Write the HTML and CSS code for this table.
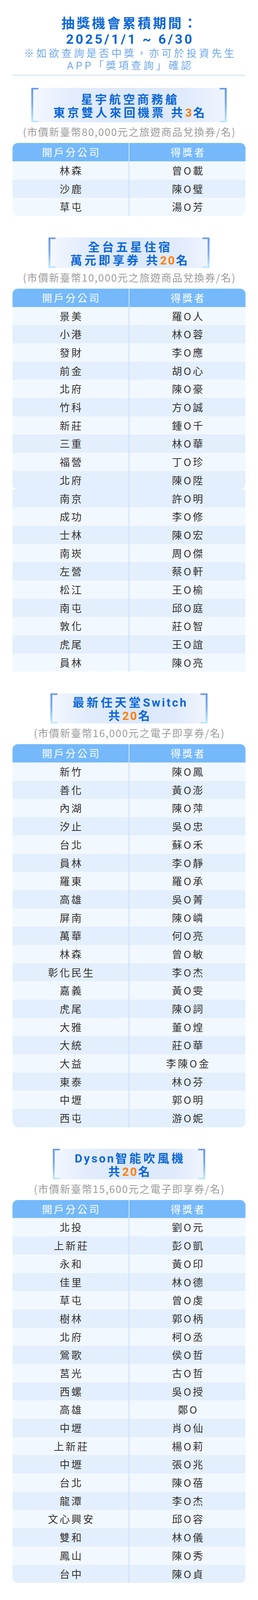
FILE: index.html
```html
<!DOCTYPE html>
<html lang="zh-Hant">
<head>
<meta charset="utf-8">
<title>抽獎得獎名單</title>
<link rel="stylesheet" href="styles.css">
</head>
<body>
<div class="page">
  <header class="intro">
    <h1 class="intro-title">抽獎機會累積期間：<br>2025/1/1 ~ 6/30</h1>
    <p class="intro-note">※如欲查詢是否中獎，亦可於投資先生<br>APP「獎項查詢」確認</p>
    <div class="divider"></div>
  </header>

  <section class="prize prize--first">
    <div class="prize-head prize-head--tall"><h2 class="prize-title">星宇航空商務艙<br>東京雙人來回機票 共<span class="num">3</span>名</h2></div>
    <p class="prize-sub">(市價新臺幣80,000元之旅遊商品兌換券/名)</p>
    <div class="winners">
      <div class="row head"><div class="cell">開戶分公司</div><div class="cell">得獎者</div></div>
      <div class="row"><div class="cell">林森</div><div class="cell">曾O載</div></div>
      <div class="row"><div class="cell">沙鹿</div><div class="cell">陳O璧</div></div>
      <div class="row"><div class="cell">草屯</div><div class="cell">湯O芳</div></div>
    </div>
  </section>

  <section class="prize">
    <div class="prize-head"><h2 class="prize-title">全台五星住宿<br>萬元即享券 共<span class="num">20</span>名</h2></div>
    <p class="prize-sub">(市價新臺幣10,000元之旅遊商品兌換券/名)</p>
    <div class="winners">
      <div class="row head"><div class="cell">開戶分公司</div><div class="cell">得獎者</div></div>
      <div class="row"><div class="cell">景美</div><div class="cell">羅O人</div></div>
      <div class="row"><div class="cell">小港</div><div class="cell">林O蓉</div></div>
      <div class="row"><div class="cell">發財</div><div class="cell">李O應</div></div>
      <div class="row"><div class="cell">前金</div><div class="cell">胡O心</div></div>
      <div class="row"><div class="cell">北府</div><div class="cell">陳O豪</div></div>
      <div class="row"><div class="cell">竹科</div><div class="cell">方O誠</div></div>
      <div class="row"><div class="cell">新莊</div><div class="cell">鍾O千</div></div>
      <div class="row"><div class="cell">三重</div><div class="cell">林O華</div></div>
      <div class="row"><div class="cell">福營</div><div class="cell">丁O珍</div></div>
      <div class="row"><div class="cell">北府</div><div class="cell">陳O陞</div></div>
    </div>
    <div class="winners winners--cont">
      <div class="row"><div class="cell">南京</div><div class="cell">許O明</div></div>
      <div class="row"><div class="cell">成功</div><div class="cell">李O修</div></div>
      <div class="row"><div class="cell">士林</div><div class="cell">陳O宏</div></div>
      <div class="row"><div class="cell">南崁</div><div class="cell">周O傑</div></div>
      <div class="row"><div class="cell">左營</div><div class="cell">蔡O軒</div></div>
      <div class="row"><div class="cell">松江</div><div class="cell">王O榆</div></div>
      <div class="row"><div class="cell">南屯</div><div class="cell">邱O庭</div></div>
      <div class="row"><div class="cell">敦化</div><div class="cell">莊O智</div></div>
      <div class="row"><div class="cell">虎尾</div><div class="cell">王O誼</div></div>
      <div class="row"><div class="cell">員林</div><div class="cell">陳O亮</div></div>
    </div>
  </section>

  <section class="prize">
    <div class="prize-head"><h2 class="prize-title">最新任天堂<span class="latin">Switch</span><br>共<span class="num">20</span>名</h2></div>
    <p class="prize-sub">(市價新臺幣16,000元之電子即享券/名)</p>
    <div class="winners">
      <div class="row head"><div class="cell">開戶分公司</div><div class="cell">得獎者</div></div>
      <div class="row"><div class="cell">新竹</div><div class="cell">陳O鳳</div></div>
      <div class="row"><div class="cell">善化</div><div class="cell">黃O澎</div></div>
      <div class="row"><div class="cell">內湖</div><div class="cell">陳O萍</div></div>
      <div class="row"><div class="cell">汐止</div><div class="cell">吳O忠</div></div>
      <div class="row"><div class="cell">台北</div><div class="cell">蘇O禾</div></div>
      <div class="row"><div class="cell">員林</div><div class="cell">李O靜</div></div>
      <div class="row"><div class="cell">羅東</div><div class="cell">羅O承</div></div>
      <div class="row"><div class="cell">高雄</div><div class="cell">吳O菁</div></div>
      <div class="row"><div class="cell">屏南</div><div class="cell">陳O嶙</div></div>
      <div class="row"><div class="cell">萬華</div><div class="cell">何O亮</div></div>
      <div class="row"><div class="cell">林森</div><div class="cell">曾O敏</div></div>
      <div class="row"><div class="cell">彰化民生</div><div class="cell">李O杰</div></div>
      <div class="row"><div class="cell">嘉義</div><div class="cell">黃O雯</div></div>
      <div class="row"><div class="cell">虎尾</div><div class="cell">陳O詞</div></div>
      <div class="row"><div class="cell">大雅</div><div class="cell">董O煌</div></div>
      <div class="row"><div class="cell">大統</div><div class="cell">莊O華</div></div>
      <div class="row"><div class="cell">大益</div><div class="cell">李陳O金</div></div>
      <div class="row"><div class="cell">東泰</div><div class="cell">林O芬</div></div>
      <div class="row"><div class="cell">中壢</div><div class="cell">郭O明</div></div>
      <div class="row"><div class="cell">西屯</div><div class="cell">游O妮</div></div>
    </div>
  </section>

  <section class="prize">
    <div class="prize-head"><h2 class="prize-title"><span class="latin">Dyson</span>智能吹風機<br>共<span class="num">20</span>名</h2></div>
    <p class="prize-sub">(市價新臺幣15,600元之電子即享券/名)</p>
    <div class="winners">
      <div class="row head"><div class="cell">開戶分公司</div><div class="cell">得獎者</div></div>
      <div class="row"><div class="cell">北投</div><div class="cell">劉O元</div></div>
      <div class="row"><div class="cell">上新莊</div><div class="cell">彭O凱</div></div>
      <div class="row"><div class="cell">永和</div><div class="cell">黃O印</div></div>
      <div class="row"><div class="cell">佳里</div><div class="cell">林O德</div></div>
      <div class="row"><div class="cell">草屯</div><div class="cell">曾O虔</div></div>
      <div class="row"><div class="cell">樹林</div><div class="cell">郭O柄</div></div>
      <div class="row"><div class="cell">北府</div><div class="cell">柯O丞</div></div>
      <div class="row"><div class="cell">鶯歌</div><div class="cell">侯O哲</div></div>
      <div class="row"><div class="cell">莒光</div><div class="cell">古O哲</div></div>
      <div class="row"><div class="cell">西螺</div><div class="cell">吳O授</div></div>
      <div class="row"><div class="cell">高雄</div><div class="cell">鄭O</div></div>
      <div class="row"><div class="cell">中壢</div><div class="cell">肖O仙</div></div>
      <div class="row"><div class="cell">上新莊</div><div class="cell">楊O莉</div></div>
      <div class="row"><div class="cell">中壢</div><div class="cell">張O兆</div></div>
      <div class="row"><div class="cell">台北</div><div class="cell">陳O蓓</div></div>
      <div class="row"><div class="cell">龍潭</div><div class="cell">李O杰</div></div>
      <div class="row"><div class="cell">文心興安</div><div class="cell">邱O容</div></div>
      <div class="row"><div class="cell">雙和</div><div class="cell">林O儀</div></div>
      <div class="row"><div class="cell">鳳山</div><div class="cell">陳O秀</div></div>
      <div class="row"><div class="cell">台中</div><div class="cell">陳O貞</div></div>
    </div>
  </section>
</div>
</body>
</html>
```

FILE: styles.css
```css
html, body {
  margin: 0;
  padding: 0;
  background: #ffffff;
}

body {
  font-family: "Noto Sans CJK TC", "Noto Sans", sans-serif;
  font-size: 16px;
  line-height: 1.2;
}

.page {
  padding: 0 32px;
}

/* multi-line headings: compact Latin face first, CJK glyphs fall back to Noto Sans CJK */
.intro-title,
.intro-note,
.prize-title {
  font-family: Roboto, "Noto Sans CJK TC", sans-serif;
}

/* ---------- intro ---------- */
.intro {
  text-align: center;
  padding-top: 39.9px;
}

.intro-title {
  margin: 0;
  padding-left: 5px;
  font-size: 34px;
  line-height: 40px;
  font-weight: 700;
  color: #0b67d5;
  letter-spacing: 5px;
}

.intro-note {
  margin: 2.1px 0 0;
  padding-left: 6px;
  font-size: 26px;
  line-height: 31.5px;
  color: #71a9ea;
  letter-spacing: 6px;
}

.divider {
  height: 1px;
  background: #9dc3ef;
  margin-top: 6.6px;
}

/* ---------- prize section ---------- */
.prize {
  margin-top: 55.2px;
  text-align: center;
  line-height: 0;
}

.prize--first {
  margin-top: 32.3px;
}

.prize-head {
  display: inline-block;
  vertical-align: top;
  position: relative;
  padding: 7.7px 50px 2.1px 56px;
  background: linear-gradient(90deg, #f4f8fe 0%, #e2ecfc 22%, #dbe8fb 50%, #dfeafc 78%, #f0f5fe 100%);
}

.prize-head--tall {
  padding-top: 12.8px;
  padding-bottom: 7.6px;
}

.prize-head::before,
.prize-head::after {
  content: "";
  position: absolute;
  top: 0;
  bottom: 0;
  width: 13px;
  border-style: solid;
  border-width: 4px 5px;
  border-image: linear-gradient(180deg, #6a9bf0 0%, #80b0f3 50%, #bde8fd 100%) 1;
}

.prize-head::before {
  left: 0;
  border-right-width: 0;
}

.prize-head::after {
  right: 0;
  border-left-width: 0;
}

.prize-title {
  margin: 0;
  font-size: 30px;
  line-height: 34px;
  font-weight: 700;
  color: #0b67d5;
  letter-spacing: 6px;
}

.latin {
  letter-spacing: 4px;
}

.num {
  color: #ff7e00;
  letter-spacing: 3px;
}

.prize-sub {
  margin: 8px 0 14px;
  padding-left: 2px;
  font-size: 26px;
  line-height: 31px;
  color: #9c9c9c;
  letter-spacing: 2px;
}

/* ---------- winners table ---------- */
.winners {
  border-radius: 14px;
  overflow: hidden;
  line-height: normal;
}

.winners--cont {
  border-radius: 0;
}

.row {
  display: flex;
}

.winners > .row:nth-child(even) {
  background: #f2f8ff;
}

.winners > .row:nth-child(odd) {
  background: #e3effd;
}

.winners > .row.head {
  background: #75b9fb;
}

.cell {
  flex: 1;
  height: 46.7px;
  line-height: 46.7px;
  padding-left: 4px;
  font-size: 26px;
  color: #333333;
  letter-spacing: 4px;
  white-space: nowrap;
}

.cell:first-child {
  border-right: 2px solid #c6ddf8;
}

.head .cell {
  color: #ffffff;
}

.head .cell:first-child {
  border-right-color: #d2e7fd;
}
```
